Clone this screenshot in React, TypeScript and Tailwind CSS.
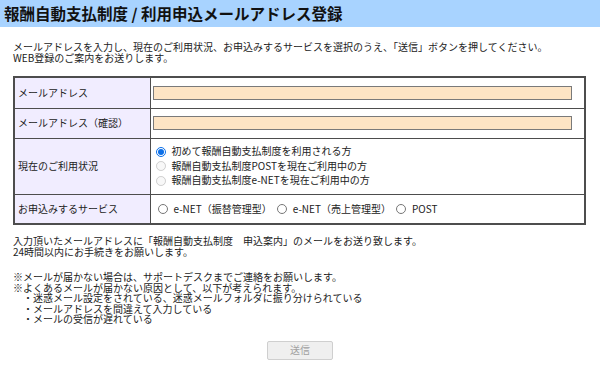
import { useState } from "react";

const FONT = "font-['Meiryo','Noto_Sans_CJK_JP','Noto_Sans',sans-serif]";

const STATUS_OPTIONS = [
  { id: "first", label: "初めて報酬自動支払制度を利用される方", disabled: false },
  { id: "post", label: "報酬自動支払制度POSTを現在ご利用中の方", disabled: true },
  { id: "enet", label: "報酬自動支払制度e-NETを現在ご利用中の方", disabled: true }
];

const SERVICE_OPTIONS = [
  { id: "transfer", label: "e-NET（振替管理型）" },
  { id: "sales", label: "e-NET（売上管理型）" },
  { id: "post", label: "POST" }
];

const NOTES = [
  "・迷惑メール設定をされている、迷惑メールフォルダに振り分けられている",
  "・メールアドレスを間違えて入力している",
  "・メールの受信が遅れている"
];

const labelCell = "border border-[#4d4d4d] bg-[#f1edff] pl-[3px] text-left font-normal align-middle w-[136px]";
const valueCell = "border border-[#4d4d4d] bg-white align-middle";

export default function App() {
  const [email, setEmail] = useState("");
  const [emailConfirm, setEmailConfirm] = useState("");
  const [status, setStatus] = useState("first");
  const [service, setService] = useState<string | null>(null);

  return (
    <div className={`${FONT} min-h-[369px] w-[600px] bg-white text-[#222]`}>
      <div className="flex h-[27px] items-center bg-[#a8d3ff] pl-[4px]">
        <h1 className="text-[15.5px] font-bold leading-none text-[#111]">
          報酬自動支払制度 / 利用申込メールアドレス登録
        </h1>
      </div>

      <div className="px-[13px] text-[10px] leading-[10.5px]">
        <p className="mt-[15px]">
          メールアドレスを入力し、現在のご利用状況、お申込みするサービスを選択のうえ、「送信」ボタンを押してください。
          <br />
          WEB登録のご案内をお送りします。
        </p>

        <table className="mt-[13px] w-[573px] border-collapse border-2 border-[#4d4d4d]">
          <tbody>
            <tr className="h-[31px]">
              <th className={labelCell}>メールアドレス</th>
              <td className={`${valueCell} pl-[2px]`}>
                <input
                  type="text"
                  value={email}
                  onChange={(event) => setEmail(event.target.value)}
                  className="block h-[14px] w-[419px] border border-[#7a7a7a] bg-[#fde4c4] outline-none"
                />
              </td>
            </tr>
            <tr className="h-[30px]">
              <th className={labelCell}>メールアドレス（確認）</th>
              <td className={`${valueCell} pl-[2px]`}>
                <input
                  type="text"
                  value={emailConfirm}
                  onChange={(event) => setEmailConfirm(event.target.value)}
                  className="block h-[14px] w-[419px] border border-[#7a7a7a] bg-[#fde4c4] outline-none"
                />
              </td>
            </tr>
            <tr className="h-[56px]">
              <th className={labelCell}>現在のご利用状況</th>
              <td className={`${valueCell} pl-[5px]`}>
                <div className="flex flex-col gap-[4px]">
                  {STATUS_OPTIONS.map((option) => (
                    <label key={option.id} className="flex items-center gap-[6px]">
                      <input
                        type="radio"
                        name="status"
                        disabled={option.disabled}
                        checked={status === option.id}
                        onChange={() => setStatus(option.id)}
                        className="m-0 h-[10px] w-[10px] accent-[#0b6fe8]"
                      />
                      <span>{option.label}</span>
                    </label>
                  ))}
                </div>
              </td>
            </tr>
            <tr className="h-[30px]">
              <th className={labelCell}>お申込みするサービス</th>
              <td className={`${valueCell} pl-[7px]`}>
                <div className="flex items-center gap-[5px]">
                  {SERVICE_OPTIONS.map((option) => (
                    <label key={option.id} className="flex items-center gap-[6px]">
                      <input
                        type="radio"
                        name="service"
                        checked={service === option.id}
                        onChange={() => setService(option.id)}
                        className="m-0 h-[10px] w-[10px] accent-[#0b6fe8]"
                      />
                      <span>{option.label}</span>
                    </label>
                  ))}
                </div>
              </td>
            </tr>
          </tbody>
        </table>

        <p className="mt-[11px]">
          入力頂いたメールアドレスに「報酬自動支払制度　申込案内」のメールをお送り致します。
          <br />
          24時間以内にお手続きをお願いします。
        </p>

        <div className="mt-[15px]">
          <p>※メールが届かない場合は、サポートデスクまでご連絡をお願いします。</p>
          <p>※よくあるメールが届かない原因として、以下が考えられます。</p>
          {NOTES.map((note) => (
            <p key={note} className="pl-[10px]">
              {note}
            </p>
          ))}
        </div>

        <div className="mt-[16px] flex justify-center">
          <button
            type="button"
            disabled
            className="h-[19px] w-[66px] rounded-[2px] border border-[#cfcfcf] bg-[#efefef] text-[10px] text-[#a0a0a0]"
          >
            送信
          </button>
        </div>
      </div>
    </div>
  );
}
